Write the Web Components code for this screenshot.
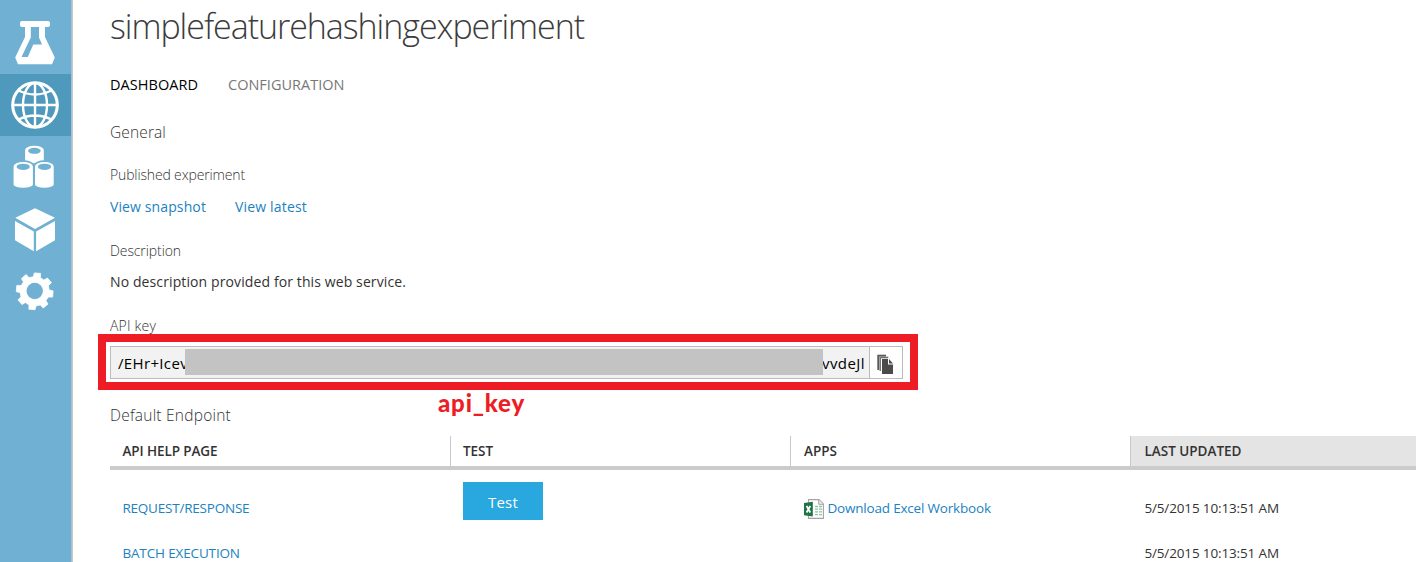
<!DOCTYPE html>
<html lang="en">
<head>
<meta charset="utf-8">
<title>simplefeaturehashingexperiment</title>
<style>
html,body{margin:0;height:100%;overflow:hidden;background:#fff}
body{font-family:"Open Sans","Noto Sans",sans-serif;color:#333}
</style>
</head>
<body>
<service-page></service-page>
<script>
const define=(name,html,after)=>{
  const t=document.createElement('template');
  t.innerHTML=html;
  customElements.define(name,class extends HTMLElement{
    constructor(){super();this.attachShadow({mode:'open'}).append(t.content.cloneNode(true));}
    connectedCallback(){if(after)after(this);}
  });
};

/* A single line of text, tracked so that it runs to the given measure. */
define('ui-text',`<style>
:host{display:block;white-space:pre;line-height:20px;font-size:14px;height:20px}
span{display:inline-block}
</style><span><slot></slot></span>`,el=>{
  const m=+el.getAttribute('measure');
  if(!m)return;
  const s=el.shadowRoot.querySelector('span');
  const n=el.textContent.length;
  s.style.letterSpacing=((m-s.getBoundingClientRect().width)/n).toFixed(3)+'px';
});

define('nav-item',`<style>
:host{display:block;width:71px;height:62px}
:host([active]){background:#4f9abc}
::slotted(svg){display:block;width:71px;height:62px}
</style><slot></slot>`);

define('side-nav',`<style>
:host{display:flex;flex-direction:column;box-sizing:border-box;width:73px;height:100%;padding-top:12px;background:linear-gradient(90deg,#70b1d3 71px,#a6c0d0 71px,#a6c0d0 72px,#c9c7ca 72px)}
</style>
<nav-item><svg viewBox="0 12 71 62" fill="#fff"><path fill-rule="evenodd" d="M22 21H48Q50 21 50 23V25Q50 27 48 27H45V37L54.8 57.5L52 64.3H18L15.2 57.5L25 37V27H22Q20 27 20 25V23Q20 21 22 21ZM30.8 27V37.5L21.5 57H27.8L33.3 44.5H42L39 37.5V27Z"/></svg></nav-item>
<nav-item active><svg viewBox="0 74 71 62" fill="none" stroke="#fff" stroke-width="2.4"><circle cx="35" cy="105" r="22.3" stroke-width="3.1"/><ellipse cx="35" cy="105" rx="12" ry="22"/><path d="M35 83V127M13 105H57M18.5 90.5Q35 98.5 51.5 90.5M18.5 119.5Q35 111.5 51.5 119.5"/></svg></nav-item>
<nav-item><svg viewBox="0 136 71 62"><g fill="#fff" stroke="#70b1d3" stroke-width="1.6"><path d="M24.3 150C24.3 143.2 44.6 143.2 44.6 150V164H24.3Z"/><path d="M12.8 166.5C12.8 159.3 33.7 159.3 33.7 166.5V184.5C33.7 190 12.8 190 12.8 184.5Z"/><path d="M34.2 166.5C34.2 159.3 54.5 159.3 54.5 166.5V184.5C54.5 190 34.2 190 34.2 184.5Z"/></g><g fill="#70b1d3"><ellipse cx="34.4" cy="150.8" rx="6.3" ry="3"/><ellipse cx="23.2" cy="166.8" rx="6.6" ry="3.1"/><ellipse cx="44.5" cy="166.8" rx="6.6" ry="3.1"/></g></svg></nav-item>
<nav-item><svg viewBox="0 198 71 62" fill="#fff"><path d="M35 208.3L55 217.7L35 229L15.3 217.7ZM15 221L33.8 231.5V251.3L15 240.3ZM55 221V240.3L36.1 251.3V231.5Z"/></svg></nav-item>
<nav-item><svg id="gear" viewBox="0 260 71 62" fill="#fff"></svg></nav-item>`,el=>{
  const cx=34.7,cy=291.3,p=[];
  for(let i=0;i<8;i++){
    for(const [o,r] of [[-14.5,14.5],[-10,18.4],[9,18.8],[13.5,14.8]]){
      const a=(i*45+9+o)*Math.PI/180;
      p.push((cx+r*Math.sin(a)).toFixed(2)+' '+(cy-r*Math.cos(a)).toFixed(2));
    }
  }
  el.shadowRoot.getElementById('gear').innerHTML='<path stroke="#fff" stroke-width=".8" stroke-linejoin="round" fill-rule="evenodd" d="M'+p.join('L')+'Z"/><circle cx="34.7" cy="291" r="8.2" fill="#70b1d3"/>';
});

define('key-field',`<style>
:host{display:block;position:relative;box-sizing:border-box;width:820px;height:56px;margin-left:-12px;border:8px solid #ee1c24;padding:4px 7px 3px 4px;background:#fff}
.field{display:flex;box-sizing:border-box;height:33px;border:1px solid #b9bcbb}
.value{flex:1;display:flex;align-items:center;background:#f2f2f2;color:#000;padding-left:7px}
.value ui-text{font-size:15px;letter-spacing:0}
.mask{position:relative;z-index:1;width:638px;height:26px;background:#c3c3c3;margin-top:-1px}
.first{width:67px}
.last{margin-left:-1px}
.copy{width:32px;border-left:1px solid #b9bcbb;background:#fff}
svg{display:block}
.note{position:absolute;left:332px;top:46px;color:#ee1c24;font:900 24px/30px Lato,sans-serif}
</style>
<div class="field"><div class="value"><div class="first"><ui-text measure="70">/EHr+Icev</ui-text></div><div class="mask"></div><ui-text class="last" measure="43">vvdeJl</ui-text></div>
<div class="copy"><svg width="32" height="31" viewBox="870 347 32 31"><path d="M877.3 354.7H886V370H877.3Z" fill="#5a5a5a"/><path d="M879.2 356.4H888.5V371H879.2Z" fill="#b5b5b5"/><path d="M880.3 357.2H888V371H880.3Z" fill="#5a5a5a"/><path d="M881 358.2H889.4L894 363V375H881Z" fill="#fff"/><path d="M882 359H888V364.5H893V374H882ZM889 359L893 363.4H889Z" fill="#4b4b4b"/></svg></div></div>
<ui-text class="note" measure="87">api_key</ui-text>`);

define('excel-icon',`<style>:host{display:block;width:20px;height:20px}svg{display:block}</style>
<svg width="20" height="20" viewBox="0 0 20 20"><path d="M4.5.6H15L19.4 5V19.4H4.5Z" fill="#fff" stroke="#a4a4a4" stroke-width="1.1"/><path d="M14.7.8V5.3H19.2" fill="#eee" stroke="#a4a4a4"/><path d="M11 7.5H14M15 7.5H18M11 10.2H14M15 10.2H18M11 12.9H14M15 12.9H18M11 15.6H14M15 15.6H18" stroke="#8bc6a3" stroke-width="1.3"/><path d="M0 4L8.8 2.8V17.5L0 16.3Z" fill="#217346"/><path d="M2.6 7L6.3 13.5M6.3 7L2.6 13.5" stroke="#fff" stroke-width="1.8"/></svg>`);

define('head-cell',`<style>
:host{display:block;box-sizing:border-box;height:30px;padding:5px 0 0 12px;border-left:1px solid #c8c8c8;font-weight:600;color:#333}
:host([first]){border-left-color:transparent;padding-left:11.5px}
:host([wide]){padding-left:13px}
:host([sorted]){background:#e4e4e4;margin-left:-1px;padding-left:13.5px}
::slotted(ui-text){font-size:13px}
</style><slot></slot>`);

define('endpoint-table',`<style>
:host{display:block;width:1306px}
.head,.row{display:grid;grid-template-columns:340px 340px 341px 285px}
.head{border-bottom:4px solid #cbcbcb}
.row{height:44px}
.row.one{height:72px}
.cell{padding:0 0 0 13px}
.cell.a{padding-left:12.4px}
.cell.c{padding-left:14px}
.cell.d{padding-left:13.4px}
.one .cell{padding-top:28px}
.one .cell.b{padding-top:12px}
.two .cell{padding-top:1px}
ui-text{font-size:13.5px}
.link{color:#1c82c0}
.button{display:flex;justify-content:center;align-items:center;width:80px;height:38px;background:#29a8e0;color:#fff;padding:0}
.button ui-text{font-size:15px;margin-top:2px}
.excel{display:flex;gap:3.4px}
excel-icon{margin-top:1px}
</style>
<div class="head">
<head-cell first><ui-text measure="95">API HELP PAGE</ui-text></head-cell>
<head-cell><ui-text measure="30">TEST</ui-text></head-cell>
<head-cell wide><ui-text measure="33">APPS</ui-text></head-cell>
<head-cell sorted><ui-text measure="97">LAST UPDATED</ui-text></head-cell>
</div>
<div class="row one">
<div class="cell a link"><ui-text measure="127">REQUEST/RESPONSE</ui-text></div>
<div class="cell b"><div class="button"><ui-text measure="30">Test</ui-text></div></div>
<div class="cell c link"><div class="excel"><excel-icon></excel-icon><ui-text measure="163.4">Download Excel Workbook</ui-text></div></div>
<div class="cell d"><ui-text measure="134.5">5/5/2015 10:13:51 AM</ui-text></div>
</div>
<div class="row two">
<div class="cell a link"><ui-text measure="117.5">BATCH EXECUTION</ui-text></div><div></div><div></div>
<div class="cell d"><ui-text measure="134.5">5/5/2015 10:13:51 AM</ui-text></div>
</div>`);

define('service-page',`<style>
:host{display:flex;height:562px;overflow:hidden}
side-nav{flex:none}
main{flex:1;min-width:0;display:flex;flex-direction:column;padding-left:37px}
.title{font-size:34px;font-weight:300;line-height:52px;height:52px;color:#3c3c3c}
.tabs,.links{display:flex}
.tabs{margin-top:22px;gap:30px}
.tabs ui-text{color:#777;font-size:14.5px;line-height:21px}
.tabs ui-text.on{color:#000}
.h{font-size:15.5px;font-weight:300}
.label{font-weight:300}
.links{gap:29px;color:#1c82c0;margin-top:12px}
</style>
<side-nav></side-nav>
<main>
<ui-text class="title" measure="474">simplefeaturehashingexperiment</ui-text>
<div class="tabs"><ui-text class="on" measure="88">DASHBOARD</ui-text><ui-text measure="116.5">CONFIGURATION</ui-text></div>
<ui-text class="h" measure="56" style="margin-top:28px">General</ui-text>
<ui-text class="label" measure="135" style="margin-top:23px">Published experiment</ui-text>
<div class="links"><ui-text measure="96">View snapshot</ui-text><ui-text measure="72">View latest</ui-text></div>
<ui-text class="label" measure="71" style="margin-top:24px">Description</ui-text>
<ui-text measure="296" style="margin-top:11px">No description provided for this web service.</ui-text>
<ui-text class="label" measure="46" style="margin-top:24px">API key</ui-text>
<key-field style="margin-top:-2px"></key-field>
<ui-text class="h" measure="121" style="margin-top:15px">Default Endpoint</ui-text>
<endpoint-table style="margin-top:11px"></endpoint-table>
</main>`);
</script>
</body>
</html>
